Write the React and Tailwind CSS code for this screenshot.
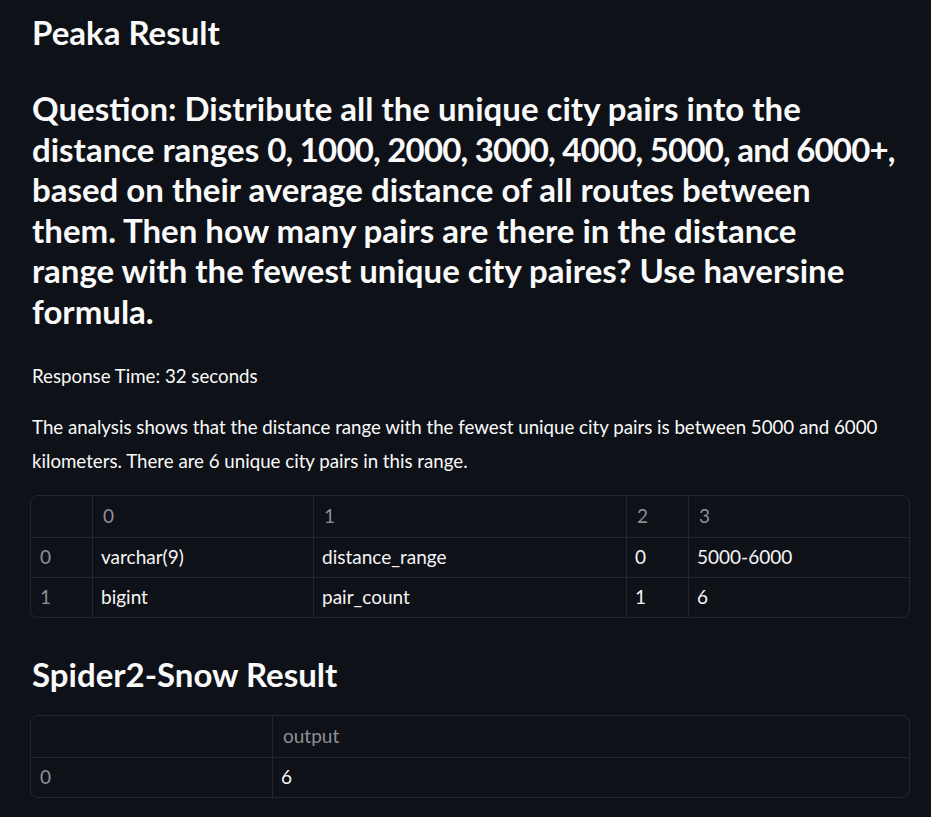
import React from "react";

const font = { fontFamily: '"Lato", "Open Sans", sans-serif' };

function Table({ cols, header, rows }) {
  return (
    <div className="rounded-[8px] border border-[#23262d] overflow-hidden">
      <div className="grid" style={{ gridTemplateColumns: cols }}>
        {header.map((h, i) => (
          <div
            key={"h" + i}
            className={`h-[41px] flex items-center text-[19px] text-[#8e9097] ${i > 0 ? "border-l border-[#23262d] px-[10px]" : "px-[10px]"}`}
          >
            {h}
          </div>
        ))}
        {rows.map((r, ri) =>
          r.map((c, ci) => (
            <div
              key={ri + "-" + ci}
              className={`h-[40px] flex items-center text-[19px] border-t border-[#23262d] ${ci > 0 ? "border-l text-[#f5f5f5] px-[8px]" : "text-[#8e9097] px-[9px]"}`}
            >
              {c}
            </div>
          ))
        )}
      </div>
    </div>
  );
}

export default function App() {
  return (
    <div className="min-h-[817px] bg-[#0e1117] text-[#fafafa] pl-[30px] pr-[21px] pt-[12px] pb-[20px]" style={font}>
      <h2 className="text-[33px] font-bold leading-[40px] pl-[2px]">Peaka Result</h2>
      <h3 className="mt-[36px] mr-[-20px] text-[33px] font-bold leading-[40.6px] pl-[2px] whitespace-nowrap">
        Question: Distribute all the unique city pairs into the
        <br />
        distance ranges <span className="tracking-[-0.8px]">0, 1000, 2000, 3000, 4000, 5000, and 6000+,</span>
        <br />
        based on their average distance of all routes between
        <br />
        them. Then how many pairs are there in the distance
        <br />
        range with the fewest unique city paires? Use haversine
        <br />
        formula.
      </h3>
      <p className="mt-[30px] text-[18.7px] leading-[28px] pl-[2px]">Response Time: 32 seconds</p>
      <p className="mt-[20px] text-[18.7px] leading-[34px] pl-[2px]">
        The analysis shows that the distance range with the fewest unique city pairs is between 5000 and 6000 kilometers. There are 6 unique city pairs in this range.
      </p>
      <div className="mt-[17px]">
        <Table
          cols="61px 221px 313px 62px 1fr"
          header={["", "0", "1", "2", "3"]}
          rows={[
            ["0", "varchar(9)", "distance_range", "0", "5000-6000"],
            ["1", "bigint", "pair_count", "1", "6"],
          ]}
        />
      </div>
      <h2 className="mt-[36px] text-[33px] font-bold leading-[40px] pl-[2px]">Spider2-Snow Result</h2>
      <div className="mt-[21px]">
        <Table cols="241px 1fr" header={["", "output"]} rows={[["0", "6"]]} />
      </div>
    </div>
  );
}
